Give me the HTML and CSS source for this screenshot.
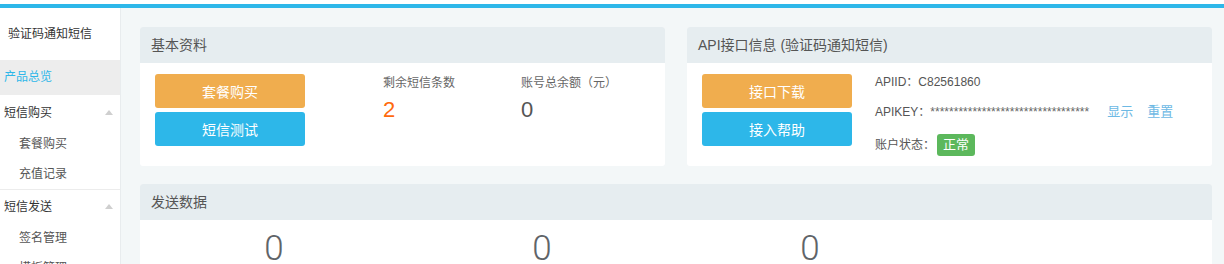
FILE: index.html
```html
<!DOCTYPE html>
<html lang="zh-CN">
<head>
    <meta charset="UTF-8">
    <title>产品总览 - 验证码通知短信</title>
    <link rel="stylesheet" href="styles.css">
</head>
<body>
    <div class="topbar"></div>
    <div class="layout">
        <aside class="sidebar">
            <div class="sb-title">验证码通知短信</div>
            <a class="sb-item active" href="#">产品总览</a>
            <div class="sb-group">
                <div class="sb-head">短信购买<span class="caret"></span></div>
                <ul class="sb-sub">
                    <li>套餐购买</li>
                    <li>充值记录</li>
                </ul>
            </div>
            <div class="sb-group">
                <div class="sb-head">短信发送<span class="caret"></span></div>
                <ul class="sb-sub">
                    <li>签名管理</li>
                    <li>模板管理</li>
                </ul>
            </div>
        </aside>

        <main class="content">
            <div class="row">
                <section class="panel">
                    <div class="panel-head">基本资料</div>
                    <div class="panel-body">
                        <div class="btns">
                            <button class="btn btn-orange">套餐购买</button>
                            <button class="btn btn-blue">短信测试</button>
                        </div>
                        <div class="stats">
                            <div class="stat">
                                <div class="stat-label">剩余短信条数</div>
                                <div class="stat-num orange">2</div>
                            </div>
                            <div class="stat">
                                <div class="stat-label">账号总余额（元）</div>
                                <div class="stat-num">0</div>
                            </div>
                        </div>
                    </div>
                </section>

                <section class="panel">
                    <div class="panel-head">API接口信息 (验证码通知短信)</div>
                    <div class="panel-body">
                        <div class="btns">
                            <button class="btn btn-orange">接口下载</button>
                            <button class="btn btn-blue">接入帮助</button>
                        </div>
                        <div class="api-info">
                            <div class="api-line">APIID：C82561860</div>
                            <div class="api-line">APIKEY：<span class="stars">**********************************</span><a class="link show" href="#">显示</a><a class="link reset" href="#">重置</a></div>
                            <div class="api-line status">账户状态：<span class="badge">正常</span></div>
                        </div>
                    </div>
                </section>
            </div>

            <section class="panel wide">
                <div class="panel-head">发送数据</div>
                <div class="send-data">
                    <div class="big-num">0</div>
                    <div class="big-num">0</div>
                    <div class="big-num">0</div>
                    <div class="big-num"></div>
                </div>
            </section>
        </main>
    </div>
</body>
</html>
```

FILE: styles.css
```css
body {
    font-family: 'Liberation Sans', 'Noto Sans CJK SC', sans-serif;
    margin: 0;
    padding: 0;
    background-color: #ffffff;
    color: #555;
    font-size: 12px;
    overflow: hidden;
}
.topbar {
    margin-top: 4px;
    height: 4px;
    background-color: #2db7e9;
}
.layout {
    display: flex;
    min-height: 256px;
}

/* sidebar */
.sidebar {
    width: 120px;
    flex-shrink: 0;
    background-color: #fff;
    border-right: 1px solid #e8ecee;
}
.sb-title {
    height: 52px;
    line-height: 52px;
    padding-left: 8px;
    color: #333;
}
.sb-item {
    display: block;
    height: 35px;
    line-height: 35px;
    padding-left: 4px;
    text-decoration: none;
    color: #333;
}
.sb-item.active {
    background-color: #ededed;
    color: #2db7e9;
}
.sb-group + .sb-group {
    border-top: 1px solid #ececec;
}
.sb-head {
    display: flex;
    justify-content: space-between;
    align-items: center;
    height: 32px;
    padding: 0 7px 0 4px;
    color: #333;
}
.sb-group + .sb-group .sb-head {
    height: 31px;
}
.caret {
    width: 0;
    height: 0;
    border-left: 4px solid transparent;
    border-right: 4px solid transparent;
    border-bottom: 5px solid #cfcfcf;
    margin-top: 2px;
}
.sb-sub {
    list-style: none;
    margin: 0;
    padding: 2px 0 0 19px;
}
.sb-sub li {
    height: 30px;
    line-height: 30px;
    color: #555;
}

/* content */
.content {
    flex: 1;
    background-color: #f3f7f8;
    padding: 19px 12px 0 19px;
}
.row {
    display: grid;
    grid-template-columns: 1fr 1fr;
    gap: 22px;
    margin-bottom: 18px;
}
.panel {
    background-color: #fff;
    border-radius: 3px;
    overflow: hidden;
}
.panel-head {
    height: 36px;
    line-height: 36px;
    padding-left: 11px;
    background-color: #e6edf0;
    font-size: 14px;
    color: #555;
}
.panel-body {
    display: flex;
    align-items: flex-start;
    height: 103px;
    padding: 4px 15px 0;
    box-sizing: border-box;
}
.btns {
    display: flex;
    flex-direction: column;
    gap: 4px;
    margin-top: 7px;
    flex-shrink: 0;
}
.btn {
    width: 150px;
    height: 34px;
    border: none;
    border-radius: 3px;
    color: #fff;
    font-family: inherit;
    font-size: 14px;
    cursor: pointer;
}
.btn-orange {
    background-color: #f0ad4e;
}
.btn-blue {
    background-color: #2db7e9;
}

.stats {
    display: flex;
    margin-left: 78px;
    margin-top: 7px;
}
.stat {
    width: 138px;
}
.stat-label {
    line-height: 18px;
    color: #666;
}
.stat-num {
    margin-top: 5px;
    font-size: 22px;
    line-height: 1.2;
    color: #555;
}
.stat-num.orange {
    color: #ff6a0d;
}

.api-info {
    margin-left: 23px;
}
.api-line {
    line-height: 30px;
    color: #555;
}
.stars {
    color: #666;
}
.link {
    text-decoration: none;
    color: #6db9e4;
    font-size: 13px;
}
.link.show {
    margin-left: 18px;
}
.link.reset {
    margin-left: 14px;
}
.api-line.status {
    display: flex;
    align-items: center;
    margin-top: 7px;
    line-height: 22px;
}
.badge {
    display: inline-block;
    width: 38px;
    height: 22px;
    line-height: 22px;
    margin-left: 2px;
    text-align: center;
    background-color: #5cb85c;
    border-radius: 3px;
    color: #fff;
    font-size: 13px;
}

.send-data {
    display: grid;
    grid-template-columns: repeat(4, 1fr);
    padding-top: 10px;
    height: 60px;
}
.big-num {
    text-align: center;
    font-family: Roboto, 'Liberation Sans', sans-serif;
    font-weight: 300;
    font-size: 35px;
    line-height: 1.1;
    color: #5f6468;
}
```
